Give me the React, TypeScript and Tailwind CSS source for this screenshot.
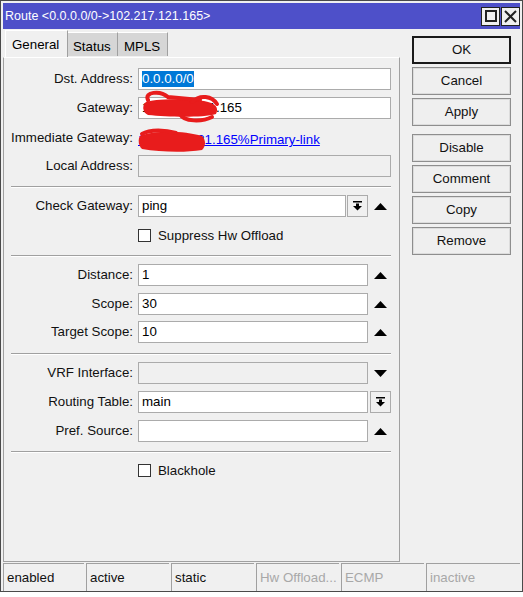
import React from "react";

// Winbox style route dialog
const FONT = "font-['Liberation_Sans',Arial,sans-serif]";

const UpArrow = () => (
    <svg width="13" height="7" viewBox="0 0 13 7">
        <path d="M6.5 0 L13 7 L0 7 Z" fill="#000"/>
    </svg>
);

const DownArrow = () => (
    <svg width="13" height="7" viewBox="0 0 13 7">
        <path d="M0 0 L13 0 L6.5 7 Z" fill="#000"/>
    </svg>
);

const DropIcon = () => (
    <svg width="9" height="10" viewBox="0 0 9 10">
        <rect x="0" y="0" width="9" height="1.5" fill="#000"/>
        <rect x="3" y="2.5" width="3" height="3" fill="#000"/>
        <path d="M0 5 L9 5 L4.5 9.5 Z" fill="#000"/>
    </svg>
);

const DropButton = ({className = ""}: { className?: string }) => (
    <div className={`h-[22px] w-[21px] border border-[#ababab] bg-[#f0f0f0] flex items-center justify-center ${className}`}>
        <DropIcon/>
    </div>
);

const Box = ({width, disabled, children}: { width: string, disabled?: boolean, children?: React.ReactNode }) => (
    <div
        className={`h-[22px] ${width} border border-[#ababab] ${disabled ? "bg-[#f0f0f0]" : "bg-white"} flex items-center pl-[3px] text-[13.3px] text-black overflow-hidden whitespace-nowrap`}>
        {children}
    </div>
);

const Label = ({text}: { text: string }) => (
    <div className="w-[134px] pr-[5px] text-right text-[13.3px] text-[#111] whitespace-nowrap">{text}</div>
);

const Separator = ({className = ""}: { className?: string }) => (
    <div className={`ml-[7px] w-[380px] border-t border-[#a0a0a0] border-b border-b-white ${className}`}/>
);

const CheckRow = ({text, className = ""}: { text: string, className?: string }) => (
    <div className={`flex items-center h-[13px] pl-[134px] ${className}`}>
        <div className="w-[13px] h-[13px] border border-[#333] bg-white"/>
        <span className="ml-[7px] text-[13.3px] text-[#111] leading-none">{text}</span>
    </div>
);

const ArrowCell = ({down}: { down?: boolean }) => (
    <div className="w-[24px] flex items-center justify-center">
        {down ? <DownArrow/> : <UpArrow/>}
    </div>
);

const BUTTONS = ["OK", "Cancel", "Apply", "Disable", "Comment", "Copy", "Remove"];
const STATUS = [
    {text: "enabled", dim: false},
    {text: "active", dim: false},
    {text: "static", dim: false},
    {text: "Hw Offload...", dim: true},
    {text: "ECMP", dim: true},
    {text: "inactive", dim: true},
];

export default function App() {
    return (
        <div className={`w-[523px] h-[597px] bg-white ${FONT}`}>
            <div className="w-[523px] h-[592px] border border-[#4a4a4a] bg-[#f0f0f0] px-[2px] pt-[2px] flex flex-col">
                {/* Title bar */}
                <div className="h-[26px] bg-[#4e50c9] flex items-center pl-[2px]">
                    <span className="text-white text-[12.5px] leading-none pt-[1px]">Route &lt;0.0.0.0/0-&gt;102.217.121.165&gt;</span>
                    <div className="ml-auto flex gap-[1px]">
                        <div className="w-[19px] h-[19px] border border-[#222] bg-[#f0f0f0] flex items-center justify-center">
                            <div className="w-[12px] h-[12px] border-2 border-[#222]"/>
                        </div>
                        <div className="w-[19px] h-[19px] border border-[#222] bg-[#f0f0f0] flex items-center justify-center">
                            <svg width="13" height="13" viewBox="0 0 13 13">
                                <path d="M1 1 L12 12 M12 1 L1 12" stroke="#222" strokeWidth="2"/>
                            </svg>
                        </div>
                    </div>
                </div>

                <div className="flex">
                    {/* Left column: tabs + panel */}
                    <div className="w-[397px] flex flex-col">
                        <div className="h-[28px] flex items-end pl-[2px] relative z-10">
                            <div className="h-[27px] w-[63px] bg-[#f0f0f0] border-t border-l border-white border-r border-r-[#a0a0a0] text-[13.3px] text-black pl-[6px] pt-[4px]">General</div>
                            <div className="h-[24px] w-[50px] bg-[#d6d6d6] border-t border-white border-r border-r-[#a0a0a0] mb-[1px] text-[13.3px] text-black pl-[5px] pt-[4px]">Status</div>
                            <div className="h-[24px] w-[50px] bg-[#d6d6d6] border-t border-white border-r border-r-[#a0a0a0] mb-[1px] text-[13.3px] text-black pl-[6px] pt-[4px]">MPLS</div>
                        </div>
                        <div className="relative h-[505px] border border-[#a0a0a0] border-t-white pt-[10px]">
                            <div className="flex items-center">
                                <Label text="Dst. Address:"/>
                                <Box width="w-[253px]">
                                    <span className="bg-[#0078d7] text-white leading-[16px]">0.0.0.0/0</span>
                                </Box>
                            </div>
                            <div className="flex items-center mt-[7px]">
                                <Label text="Gateway:"/>
                                <Box width="w-[253px]">102.217.121.165</Box>
                            </div>
                            <div className="flex items-end h-[22px] mt-[7px]">
                                <Label text="Immediate Gateway:"/>
                                <span className="text-[13.3px] text-[#0000ff] underline leading-[16px]">102.217.121.165%Primary-link</span>
                            </div>
                            <div className="flex items-center mt-[7px]">
                                <Label text="Local Address:"/>
                                <Box width="w-[253px]" disabled/>
                            </div>

                            <Separator className="mt-[9px]"/>

                            <div className="flex items-center mt-[7px]">
                                <Label text="Check Gateway:"/>
                                <Box width="w-[208px]">ping</Box>
                                <DropButton className="ml-[1px]"/>
                                <ArrowCell/>
                            </div>
                            <CheckRow text="Suppress Hw Offload" className="mt-[12px]"/>

                            <Separator className="mt-[13px]"/>

                            <div className="flex items-center mt-[7px]">
                                <Label text="Distance:"/>
                                <Box width="w-[230px]">1</Box>
                                <ArrowCell/>
                            </div>
                            <div className="flex items-center mt-[7px]">
                                <Label text="Scope:"/>
                                <Box width="w-[230px]">30</Box>
                                <ArrowCell/>
                            </div>
                            <div className="flex items-center mt-[6px]">
                                <Label text="Target Scope:"/>
                                <Box width="w-[230px]">10</Box>
                                <ArrowCell/>
                            </div>

                            <Separator className="mt-[10px]"/>

                            <div className="flex items-center mt-[7px]">
                                <Label text="VRF Interface:"/>
                                <Box width="w-[230px]" disabled/>
                                <ArrowCell down/>
                            </div>
                            <div className="flex items-center mt-[7px]">
                                <Label text="Routing Table:"/>
                                <Box width="w-[230px]">main</Box>
                                <DropButton className="ml-[2px]"/>
                            </div>
                            <div className="flex items-center mt-[7px]">
                                <Label text="Pref. Source:"/>
                                <Box width="w-[230px]"/>
                                <ArrowCell/>
                            </div>

                            <Separator className="mt-[9px]"/>

                            <CheckRow text="Blackhole" className="mt-[11px]"/>

                            {/* redaction scribbles */}
                            <svg className="absolute left-[134px] top-[32px]" width="84" height="34" viewBox="0 0 84 34">
                                <path d="M8 12 C 14 9, 44 8, 66 11 C 78 13, 81 18, 78 24 C 64 28, 30 27, 10 25 C 4 22, 4 15, 8 12 Z" fill="#e81c1c"/>
                                <path d="M10 10 C 6 2, 22 0, 30 7 L 62 10" stroke="#e81c1c" strokeWidth="4" fill="none" strokeLinecap="round"/>
                                <path d="M42 24 C 46 32, 64 32, 74 27" stroke="#e81c1c" strokeWidth="4" fill="none" strokeLinecap="round"/>
                                <path d="M54 12 C 62 4, 74 6, 79 14" stroke="#e81c1c" strokeWidth="4" fill="none" strokeLinecap="round"/>
                            </svg>
                            <svg className="absolute left-[132px] top-[70px]" width="72" height="26" viewBox="0 0 72 26">
                                <path d="M4 8 C 20 2, 48 3, 66 8 C 70 12, 70 18, 66 22 C 48 25, 24 24, 6 21 C 2 17, 2 11, 4 8 Z" fill="#e81c1c"/>
                                <path d="M6 6 C 14 1, 30 2, 40 5" stroke="#e81c1c" strokeWidth="4" fill="none" strokeLinecap="round"/>
                            </svg>
                        </div>
                    </div>

                    {/* Right column: buttons */}
                    <div className="ml-[12px] w-[99px] pt-[7px] flex flex-col gap-[3px]">
                        {BUTTONS.map((b, i) => (
                            <div key={b}
                                 className={`h-[28px] flex items-center justify-center text-[13.3px] text-[#111] bg-[#efefef] ${i === 0 ? "border-2 border-[#1a1a1a]" : "border border-[#8e8e8e] shadow-[inset_0_0_0_1px_#dcdcdc]"} ${i === 3 ? "mt-[5px]" : ""}`}>
                                {b}
                            </div>
                        ))}
                    </div>
                </div>

                {/* Status bar */}
                <div className="mt-[1px] h-[28px] flex gap-[2px]">
                    {STATUS.map((s, i) => (
                        <div key={s.text}
                             className={`${i === 0 ? "w-[81px]" : i === STATUS.length - 1 ? "flex-1" : "w-[83px]"} border-t border-l border-[#a0a0a0] pl-[3px] flex items-center text-[13.3px] whitespace-nowrap ${s.dim ? "text-[#a8a8a8]" : "text-[#111]"}`}>
                            {s.text}
                        </div>
                    ))}
                </div>
            </div>
        </div>
    );
}
